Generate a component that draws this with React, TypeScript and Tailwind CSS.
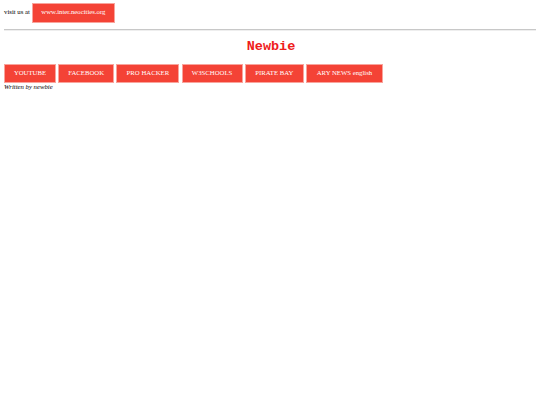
import React from "react";

export default function App() {
  const links = ["YOUTUBE", "FACEBOOK", "PRO HACKER", "W3SCHOOLS", "PIRATE BAY", "ARY NEWS english"];
  const widths = ["w-[52px]", "w-[56px]", "w-[63px]", "w-[61px]", "w-[59px]", "w-[77px]"];
  return (
    <div className="w-[540px] h-[405px] bg-white px-[4px] pt-[3px] font-['Liberation_Serif',serif] text-black">
      <div className="flex items-center h-[19.5px] text-[6.75px] leading-none">
        <span>visit us at</span>
        <a className="ml-[2px] h-[19.5px] w-[83px] flex items-center justify-center bg-[#f44336] text-white border border-[#f9a49c]">
          www.inter.neocities.org
        </a>
      </div>
      <div className="mt-[6.5px] h-[2px] border-t border-[#c8c8c8] border-b border-b-[#eeeeee]" />
      <h1 className="mt-[9px] text-center font-['Liberation_Mono',monospace] font-bold text-[13.5px] leading-none text-[#ef1c1c] pl-[2px]">
        Newbie
      </h1>
      <div className="mt-[10px] flex gap-[2.2px] text-[6.75px] leading-none">
        {links.map((l, i) => (
          <a
            key={l}
            className={
              "h-[19.5px] pt-[1px] flex items-center justify-center bg-[#f44336] text-white border border-[#f9a49c] " +
              widths[i]
            }
          >
            {l}
          </a>
        ))}
      </div>
      <div className="italic text-[6.75px] leading-[8px]">Written by newbie</div>
    </div>
  );
}
